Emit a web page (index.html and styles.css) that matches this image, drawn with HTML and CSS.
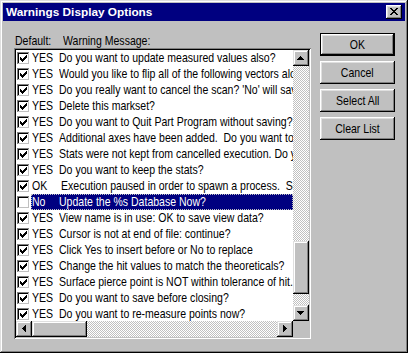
FILE: index.html
```html
<html>
  <head>
    <title>Warnings Display Options</title>
    <link rel="stylesheet" href="styles.css">
  </head>
  <body>
    <svg class="defs" width="0" height="0">
      <symbol id="cb-on" viewBox="0 0 13 13">
        <path fill="#808080" d="M0 0h12v1H1v11H0z"/>
        <path fill="#fff" d="M12 0h1v13H0v-1h12z"/>
        <path fill="#000" d="M1 1h10v1H2v9H1z"/>
        <path fill="#c0c0c0" d="M11 1h1v11H1v-1h10z"/>
        <rect x="2" y="2" width="9" height="9" fill="#fff"/>
        <path fill="#000" d="M9 3h1v1H9zM8 4h2v1H8zM3 5h1v1H3zM7 5h3v1H7zM3 6h2v1H3zM6 6h3v1H6zM3 7h5v1H3zM4 8h3v1H4zM5 9h1v1H5z"/>
      </symbol>
      <symbol id="cb-off" viewBox="0 0 13 13">
        <path fill="#808080" d="M0 0h12v1H1v11H0z"/>
        <path fill="#fff" d="M12 0h1v13H0v-1h12z"/>
        <path fill="#000" d="M1 1h10v1H2v9H1z"/>
        <path fill="#c0c0c0" d="M11 1h1v11H1v-1h10z"/>
        <rect x="2" y="2" width="9" height="9" fill="#fff"/>
      </symbol>
    </svg>

    <div class="window">
      <div class="titlebar">
        <span class="title">Warnings Display Options</span>
        <span class="close">
          <svg width="8" height="7" viewBox="0 0 8 7" shape-rendering="crispEdges">
            <path fill="#000" d="M0 0h2v1H0zM6 0h2v1H6zM1 1h2v1H1zM5 1h2v1H5zM2 2h4v1H2zM3 3h2v1H3zM2 4h4v1H2zM1 5h2v1H1zM5 5h2v1H5zM0 6h2v1H0zM6 6h2v1H6z"/>
          </svg>
        </span>
      </div>

      <div class="main">
        <div class="left">
          <div class="header">
            <span class="col-default"><span class="t">Default:</span></span>
            <span class="t">Warning Message:</span>
          </div>

          <div class="listbox">
            <div class="list-top">
              <div class="rows">
                <div class="row"><svg class="cb"><use href="#cb-on"/></svg><div class="item"><span class="status"><span class="t">YES</span></span><span class="t">Do you want to update measured values also?</span></div></div>
                <div class="row"><svg class="cb"><use href="#cb-on"/></svg><div class="item"><span class="status"><span class="t">YES</span></span><span class="t">Would you like to flip all of the following vectors along the approach?</span></div></div>
                <div class="row"><svg class="cb"><use href="#cb-on"/></svg><div class="item"><span class="status"><span class="t">YES</span></span><span class="t">Do you really want to cancel the scan? 'No' will save the data.</span></div></div>
                <div class="row"><svg class="cb"><use href="#cb-on"/></svg><div class="item"><span class="status"><span class="t">YES</span></span><span class="t">Delete this markset?</span></div></div>
                <div class="row"><svg class="cb"><use href="#cb-on"/></svg><div class="item"><span class="status"><span class="t">YES</span></span><span class="t">Do you want to Quit Part Program without saving?</span></div></div>
                <div class="row"><svg class="cb"><use href="#cb-on"/></svg><div class="item"><span class="status"><span class="t">YES</span></span><span class="t">Additional axes have been added.  Do you want to keep them?</span></div></div>
                <div class="row"><svg class="cb"><use href="#cb-on"/></svg><div class="item"><span class="status"><span class="t">YES</span></span><span class="t">Stats were not kept from cancelled execution. Do you want to keep them?</span></div></div>
                <div class="row"><svg class="cb"><use href="#cb-on"/></svg><div class="item"><span class="status"><span class="t">YES</span></span><span class="t">Do you want to keep the stats?</span></div></div>
                <div class="row"><svg class="cb"><use href="#cb-on"/></svg><div class="item"><span class="status"><span class="t">OK</span></span><span class="t ok">Execution paused in order to spawn a process.  See the log.</span></div></div>
                <div class="row selected"><svg class="cb"><use href="#cb-off"/></svg><div class="item"><span class="status"><span class="t">No</span></span><span class="t">Update the %s Database Now?</span></div></div>
                <div class="row"><svg class="cb"><use href="#cb-on"/></svg><div class="item"><span class="status"><span class="t">YES</span></span><span class="t">View name is in use: OK to save view data?</span></div></div>
                <div class="row"><svg class="cb"><use href="#cb-on"/></svg><div class="item"><span class="status"><span class="t">YES</span></span><span class="t">Cursor is not at end of file: continue?</span></div></div>
                <div class="row"><svg class="cb"><use href="#cb-on"/></svg><div class="item"><span class="status"><span class="t">YES</span></span><span class="t">Click Yes to insert before or No to replace</span></div></div>
                <div class="row"><svg class="cb"><use href="#cb-on"/></svg><div class="item"><span class="status"><span class="t">YES</span></span><span class="t">Change the hit values to match the theoreticals?</span></div></div>
                <div class="row"><svg class="cb"><use href="#cb-on"/></svg><div class="item"><span class="status"><span class="t">YES</span></span><span class="t">Surface pierce point is NOT within tolerance of hit.</span></div></div>
                <div class="row"><svg class="cb"><use href="#cb-on"/></svg><div class="item"><span class="status"><span class="t">YES</span></span><span class="t">Do you want to save before closing?</span></div></div>
                <div class="row"><svg class="cb"><use href="#cb-on"/></svg><div class="item"><span class="status"><span class="t">YES</span></span><span class="t">Do you want to re-measure points now?</span></div></div>
              </div>

              <div class="vscroll">
                <div class="sbtn">
                  <svg width="7" height="4" viewBox="0 0 7 4" shape-rendering="crispEdges"><path d="M3 0h1v1H3zM2 1h3v1H2zM1 2h5v1H1zM0 3h7v1H0z"/></svg>
                </div>
                <div class="vtrack"><div class="vthumb"></div></div>
                <div class="sbtn">
                  <svg width="7" height="4" viewBox="0 0 7 4" shape-rendering="crispEdges"><path d="M0 0h7v1H0zM1 1h5v1H1zM2 2h3v1H2zM3 3h1v1H3z"/></svg>
                </div>
              </div>
            </div>

            <div class="list-bottom">
              <div class="sbtn">
                <svg width="4" height="7" viewBox="0 0 4 7" shape-rendering="crispEdges"><path d="M0 3h1v1H0zM1 2h1v3H1zM2 1h1v5H2zM3 0h1v7H3z"/></svg>
              </div>
              <div class="htrack"><div class="hthumb"></div></div>
              <div class="sbtn">
                <svg width="4" height="7" viewBox="0 0 4 7" shape-rendering="crispEdges"><path d="M0 0h1v7H0zM1 1h1v5H1zM2 2h1v3H2zM3 3h1v1H3z"/></svg>
              </div>
              <div class="corner"></div>
            </div>
          </div>
        </div>

        <div class="buttons">
          <button class="btn default"><span class="t">OK</span></button>
          <button class="btn"><span class="t">Cancel</span></button>
          <button class="btn"><span class="t">Select All</span></button>
          <button class="btn"><span class="t">Clear List</span></button>
        </div>
      </div>
    </div>
  </body>
</html>
```

FILE: styles.css
```css
* {
  box-sizing: border-box;
}

body {
  margin: 0;
  background: #c0c0c0;
  font-family: "Liberation Sans", Arial, sans-serif;
  font-size: 13px;
  color: #000;
}

.defs {
  display: block;
  width: 0;
  height: 0;
}

/* the dialog font is a tall, narrow bitmap face: squeeze Liberation Sans */
.t {
  display: inline-block;
  white-space: pre;
  transform: scaleX(0.81);
  transform-origin: 0 50%;
}

/* window frame */
.window {
  width: 408px;
  height: 353px;
  padding: 3px;
  background: #c0c0c0;
  box-shadow: inset -1px -1px #000, inset 1px 1px #dfdfdf,
    inset -2px -2px #808080, inset 2px 2px #fff;
}

.titlebar {
  height: 18px;
  padding: 0 3px;
  display: flex;
  align-items: center;
  justify-content: space-between;
  background: #000080;
  color: #fff;
}

.title {
  font-weight: bold;
  font-size: 11.8px;
  line-height: 18px;
}

.close {
  width: 16px;
  height: 14px;
  display: flex;
  align-items: center;
  justify-content: center;
  padding: 0 1px 1px 0;
  background: #c0c0c0;
  box-shadow: inset -1px -1px #000, inset 1px 1px #fff,
    inset -2px -2px #808080, inset 2px 2px #dfdfdf;
}

.main {
  display: flex;
  gap: 9px;
  padding: 12px 0 0 11px;
}

.left {
  width: 297px;
}

.header {
  height: 15px;
  line-height: 15px;
  display: flex;
  padding-left: 1px;
}

.col-default {
  width: 48px;
}

/* list box */
.listbox {
  height: 291px;
  padding: 2px;
  display: flex;
  flex-direction: column;
  background: #fff;
  box-shadow: inset 1px 1px #808080, inset -1px -1px #fff,
    inset 2px 2px #000, inset -2px -2px #c0c0c0;
}

.list-top {
  height: 271px;
  display: flex;
}

.rows {
  flex: 1;
  min-width: 0;
  overflow: hidden;
}

.row {
  height: 16px;
  display: flex;
  align-items: center;
  gap: 1px;
  padding-left: 1px;
}

.cb {
  width: 13px;
  height: 13px;
  flex: none;
  shape-rendering: crispEdges;
}

.item {
  flex: 1;
  min-width: 0;
  height: 16px;
  line-height: 16px;
  display: flex;
  padding-left: 1px;
  overflow: hidden;
}

.status {
  width: 27px;
  flex: none;
}

.item .t {
  flex: none;
}

.t.ok {
  margin-left: 2px;
}

.row.selected .item {
  background: #000080;
  color: #fff;
  outline: 1px dotted #c0c0c0;
  outline-offset: -1px;
}

/* scroll bars */
.sbtn {
  width: 16px;
  height: 16px;
  flex: none;
  display: flex;
  align-items: center;
  justify-content: center;
  padding: 0 1px 1px 0;
  background: #c0c0c0;
  box-shadow: inset -1px -1px #000, inset 1px 1px #dfdfdf,
    inset -2px -2px #808080, inset 2px 2px #fff;
}

.vscroll {
  width: 16px;
  display: flex;
  flex-direction: column;
}

.vtrack,
.htrack {
  flex: 1;
  display: flex;
  background: repeating-conic-gradient(#c0c0c0 0 25%, #fff 0 50%) 0 0 / 2px 2px;
}

.vtrack {
  flex-direction: column;
  padding-top: 175px;
}

.vthumb,
.hthumb {
  background: #c0c0c0;
  box-shadow: inset -1px -1px #000, inset 1px 1px #dfdfdf,
    inset -2px -2px #808080, inset 2px 2px #fff;
}

.vthumb {
  height: 53px;
}

.hthumb {
  width: 55px;
}

.list-bottom {
  height: 16px;
  display: flex;
}

.corner {
  width: 16px;
  background: #c0c0c0;
}

/* buttons */
.buttons {
  width: 75px;
  display: flex;
  flex-direction: column;
  gap: 5px;
}

.btn {
  height: 23px;
  padding: 0;
  border: none;
  font: inherit;
  color: #000;
  background: #c0c0c0;
  box-shadow: inset -1px -1px #000, inset 1px 1px #fff,
    inset -2px -2px #808080, inset 2px 2px #dfdfdf;
}

.btn .t {
  transform-origin: 50% 50%;
}

.btn.default {
  box-shadow: inset 0 0 0 1px #000, inset -2px -2px #000, inset 2px 2px #fff,
    inset -3px -3px #808080, inset 3px 3px #dfdfdf;
}
```
